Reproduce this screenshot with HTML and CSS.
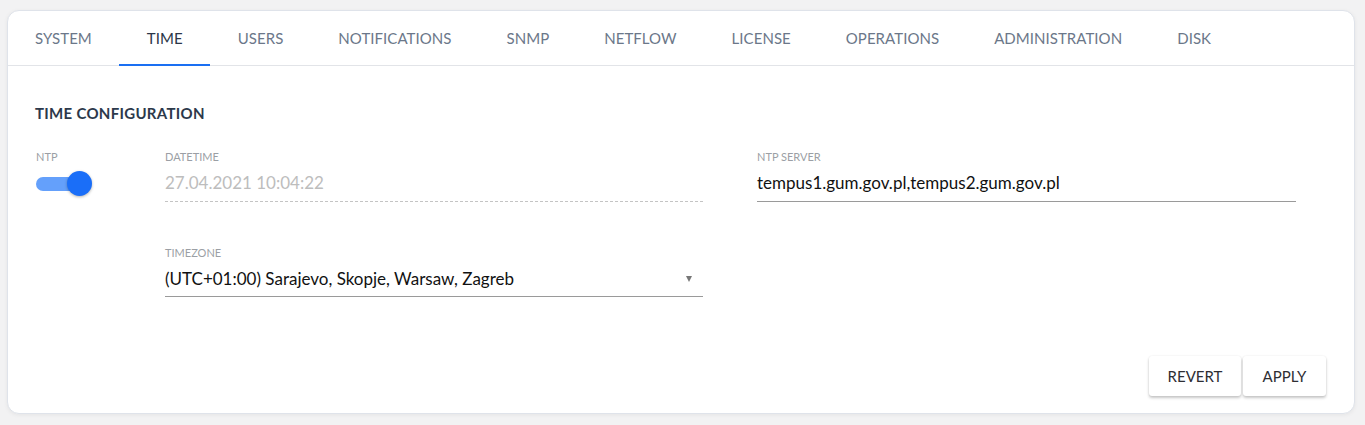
FILE: index.html
```html
<!DOCTYPE html>
<html lang="en">
<head>
<meta charset="utf-8">
<title>Time configuration</title>
<link rel="stylesheet" href="styles.css">
</head>
<body>
<div class="card">
  <nav class="tabs">
    <a class="tab">SYSTEM</a>
    <a class="tab active">TIME</a>
    <a class="tab">USERS</a>
    <a class="tab">NOTIFICATIONS</a>
    <a class="tab">SNMP</a>
    <a class="tab">NETFLOW</a>
    <a class="tab">LICENSE</a>
    <a class="tab">OPERATIONS</a>
    <a class="tab">ADMINISTRATION</a>
    <a class="tab">DISK</a>
  </nav>
  <section class="content">
    <h2 class="title">TIME CONFIGURATION</h2>
    <div class="form">
      <div class="field ntp">
        <div class="label">NTP</div>
        <div class="toggle"><span class="track"></span><span class="knob"></span></div>
      </div>
      <div class="field">
        <div class="label">DATETIME</div>
        <div class="value disabled">27.04.2021 10:04:22</div>
      </div>
      <div class="field">
        <div class="label">NTP SERVER</div>
        <div class="value">tempus1.gum.gov.pl,tempus2.gum.gov.pl</div>
      </div>
      <div class="field tz">
        <div class="label">TIMEZONE</div>
        <div class="value select">(UTC+01:00) Sarajevo, Skopje, Warsaw, Zagreb<span class="arrow"></span></div>
      </div>
    </div>
    <div class="actions">
      <button class="btn revert">REVERT</button>
      <button class="btn apply">APPLY</button>
    </div>
  </section>
</div>
</body>
</html>
```
FILE: styles.css
```css
* { box-sizing: border-box; }
html, body { margin: 0; }
body {
  background: #f2f2f3;
  padding: 10px 10px 11px 7px;
  font-family: Lato, "Noto Sans", sans-serif;
  height: 425px;
}
.card {
  background: #fff;
  border: 1px solid #dfe3ea;
  border-radius: 12px;
  box-shadow: 0 1px 4px rgba(0,0,0,0.06);
  height: 404px;
  display: flex;
  flex-direction: column;
}
.tabs {
  display: flex;
  height: 55px;
  border-bottom: 1px solid #e2e4e8;
}
.tab {
  padding: 0 27.5px;
  display: flex;
  align-items: center;
  font-size: 15px;
  letter-spacing: 0.05px;
  color: #6b7789;
  position: relative;
}
.tab:first-child { padding-left: 27px; }
.tab.active { color: #2b3648; }
.tab.active::after {
  content: "";
  position: absolute;
  left: 0; right: 0; bottom: -1px;
  height: 2px;
  background: #1a6ff2;
}
.content {
  flex: 1;
  padding: 38px 28px 17px 27px;
  display: flex;
  flex-direction: column;
}
.title {
  margin: 0;
  font-size: 15px;
  line-height: 18px;
  font-weight: 700;
  color: #2c394b;
  letter-spacing: 0.3px;
}
.form {
  margin-top: 29px;
  display: grid;
  grid-template-columns: 76px 538px 539px;
  column-gap: 54px;
  row-gap: 45px;
}
.field .label {
  font-size: 11px;
  line-height: 12px;
  color: #9b9fa5;
  margin-bottom: 8px;
}
.ntp .label { padding-left: 1px; }
.value {
  font-size: 17px;
  line-height: 24px;
  color: #111;
  padding-bottom: 6px;
  border-bottom: 1px solid #9a9a9a;
  position: relative;
}
.value.disabled {
  color: #bdbdbd;
  border-bottom: 1px dashed #c4c4c4;
}
.tz { grid-column: 2; }
.select { padding-bottom: 5px; }
.arrow {
  position: absolute;
  right: 11px;
  top: 9px;
  width: 0; height: 0;
  border-left: 3.5px solid transparent;
  border-right: 3.5px solid transparent;
  border-top: 6px solid #777;
}
.toggle {
  position: relative;
  width: 58px;
  height: 26px;
  margin-top: 1px;
}
.track {
  position: absolute;
  left: 1px; top: 6px;
  width: 48px; height: 14px;
  border-radius: 7px;
  background: #64a0fb;
}
.knob {
  position: absolute;
  left: 32px; top: 0;
  width: 25px; height: 25px;
  border-radius: 50%;
  background: #1a6ef8;
  box-shadow: 0 1px 3px rgba(0,0,0,0.3);
}
.actions {
  margin-top: auto;
  display: flex;
  justify-content: flex-end;
  gap: 2px;
}
.btn {
  font-family: Lato, "Noto Sans", sans-serif;
  font-size: 15px;
  color: #2e2e33;
  background: #fff;
  border: none;
  border-radius: 3px;
  height: 40px;
  box-shadow: 0 2px 3px rgba(0,0,0,0.22), 0 0 2px rgba(0,0,0,0.08);
}
.revert { width: 92px; }
.apply { width: 83px; }
```
